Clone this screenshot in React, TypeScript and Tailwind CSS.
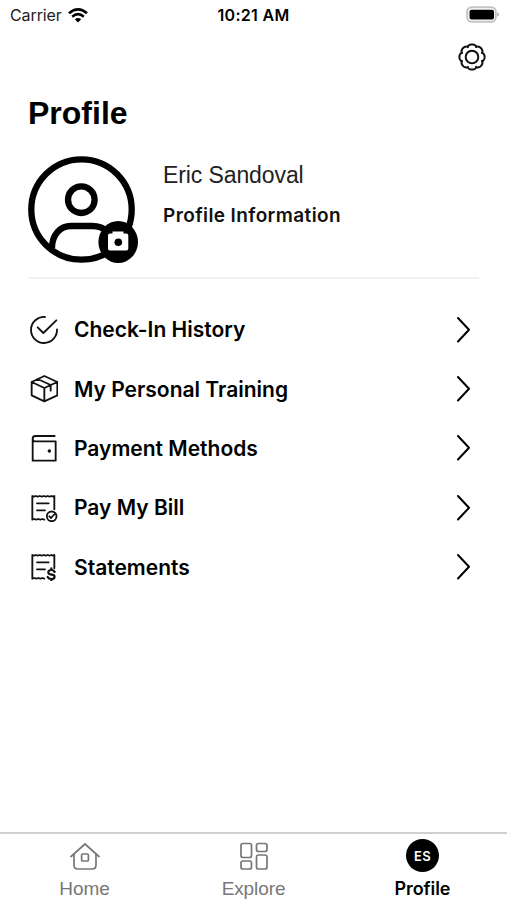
import type { ReactNode } from "react";

// Scalloped outline for the settings gear: wide lobes, narrow notches
const gearPath = () => {
  const points: string[] = [];
  for (let i = 0; i < 160; i++) {
    const t = (i / 160) * Math.PI * 2;
    const r = 10.7 + 1.9 * Math.sqrt(Math.abs(Math.cos(t * 4)));
    points.push(`${(14 + r * Math.sin(t)).toFixed(2)} ${(14 - r * Math.cos(t)).toFixed(2)}`);
  }
  return `M${points.join("L")}Z`;
};

function RowIcon({ children }: { children: ReactNode }) {
  return (
    <svg
      className="h-7 w-7 shrink-0"
      viewBox="0 0 84 84"
      fill="none"
      stroke="#111"
      strokeWidth="5.5"
      strokeLinecap="round"
      strokeLinejoin="round"
    >
      {children}
    </svg>
  );
}

function Receipt() {
  return (
    <>
      <path d="M7 77V6l5 2 5-2 6 2 6-2 6 2 6-2 6 2 6-2 6 2 6-2 4 2 4-2V46M7 77l6-2 6 2 6-2 6 2 6-2 6 2" />
      <path d="M21 28H56M21 49H45" />
    </>
  );
}

const rows = [
  {
    label: "Check-In History",
    icon: (
      <RowIcon>
        <path d="M45 3A39 39 0 1 0 81 40" />
        <path d="M23 34L40 51L79 13" />
      </RowIcon>
    ),
  },
  {
    label: "My Personal Training",
    icon: (
      <RowIcon>
        <path d="M43 3L82 21V61L43 79L5 61V21ZM5 21L43 39L82 21M43 39V79M23 12L62 30V47" />
      </RowIcon>
    ),
  },
  {
    label: "Payment Methods",
    icon: (
      <RowIcon>
        <path d="M74 6H16Q8 6 8 14V80H77V22H15Q8 22 8 14" />
        <circle cx="58" cy="51" r="2.5" fill="#111" />
      </RowIcon>
    ),
  },
  {
    label: "Pay My Bill",
    icon: (
      <RowIcon>
        <Receipt />
        <circle cx="65" cy="67" r="14.5" />
        <path d="M58 67L63 72L74 60" />
      </RowIcon>
    ),
  },
  {
    label: "Statements",
    icon: (
      <RowIcon>
        <Receipt />
        <path
          d="M74 57C72 52 68 51 64 51C53 51 52 62 61 64L66 65C77 67 76 78 64 78C59 78 55 76 53 72M64 46V51M64 78V83"
          strokeWidth="6.5"
        />
      </RowIcon>
    ),
  },
];

function StatusBar() {
  return (
    <div className="grid h-[30px] grid-cols-3 items-center pl-[10px] pr-[8px] text-[16px] text-[#222]">
      <div className="flex items-center gap-[6px]">
        <span className="tracking-[-0.1px]">Carrier</span>
        <svg className="h-[15px] w-5" viewBox="0 0 20 15" fill="none" stroke="#000" strokeWidth="2.7">
          <path d="M1 5.3Q10 -2.4 19 5.3" />
          <path d="M4.2 8.7Q10 3.7 15.8 8.7" />
          <path d="M10 14.6L6.8 11.3Q10 8.6 13.2 11.3Z" fill="#000" stroke="none" />
        </svg>
      </div>
      <div className="-ml-[2px] text-center font-semibold tracking-[0.3px] whitespace-nowrap text-black">10:21 AM</div>
      <div className="flex justify-end">
        <svg className="-mt-[2px] h-[17px] w-[33px]" viewBox="0 0 33 17">
          <rect x="1.2" y="1.2" width="28.6" height="14.6" rx="4.5" fill="#fff" stroke="#c4c4c4" strokeWidth="2" />
          <rect x="3.5" y="3.7" width="24.5" height="9.8" rx="2" />
          <path d="M31.3 6.3Q33 7 33 8.5T31.3 10.7Z" fill="#aaa" />
        </svg>
      </div>
    </div>
  );
}

function Avatar() {
  return (
    <svg className="h-[108px] w-[111px] shrink-0" viewBox="0 0 111 108" fill="none" stroke="#000" strokeWidth="6.3">
      <circle cx="53.5" cy="53.5" r="50.2" />
      <circle cx="53.3" cy="43.7" r="13.3" />
      <path d="M24 92C24 79 32 70 43 70H64C71 70 76 72 80 76" />
      <ellipse cx="90.2" cy="86" rx="19.8" ry="21" fill="#000" stroke="none" />
      <path
        d="M82 77.5H84.5V75.5H95.5V77.5H98.3Q100.3 77.5 100.3 79.5V92.5Q100.3 94.5 98.3 94.5H82Q80 94.5 80 92.5V79.5Q80 77.5 82 77.5Z"
        fill="#fff"
        stroke="none"
      />
      <circle cx="90.3" cy="86.2" r="3.8" fill="#000" stroke="none" />
    </svg>
  );
}

function TabBar() {
  return (
    <nav className="grid h-[68px] grid-cols-3 border-t-2 border-[#d0d0d0] font-['Liberation_Sans',sans-serif] text-[19px] leading-[22px] text-[#777]">
      <div className="flex flex-col items-center pt-[5px]">
        <svg className="h-8 w-8" viewBox="0 0 32 32" fill="none" stroke="#777" strokeWidth="1.7">
          <path d="M1.5 18L16 5L30.5 18" />
          <path d="M5 15V26Q5 30 9 30H23Q27 30 27 26V15" />
          <rect x="12.6" y="15" width="6.8" height="7" rx="1" />
        </svg>
        <span className="mt-[7px]">Home</span>
      </div>
      <div className="flex flex-col items-center pt-[5px]">
        <svg className="h-8 w-8" viewBox="0 0 32 32" fill="none" stroke="#777" strokeWidth="1.7">
          <rect x="3" y="4.5" width="10.5" height="14" rx="2" />
          <rect x="3" y="22" width="10.5" height="8" rx="2" />
          <rect x="18.5" y="4.5" width="10.5" height="8" rx="2" />
          <rect x="18.5" y="16" width="10.5" height="14" rx="2" />
        </svg>
        <span className="mt-[7px] tracking-[-0.1px]">Explore</span>
      </div>
      <div className="flex flex-col items-center pt-[5px] text-black">
        <div className="flex h-[33px] w-[33px] items-center justify-center rounded-full bg-black font-['Inter',sans-serif] text-[13px] font-semibold tracking-[0.3px] text-white">
          ES
        </div>
        <span className="mt-[6px] font-['Inter',sans-serif] text-[18px] font-semibold tracking-[-0.1px]">Profile</span>
      </div>
    </nav>
  );
}

export default function App() {
  return (
    <div className="flex h-[900px] w-[507px] flex-col bg-white font-['Inter',sans-serif] text-black">
      <StatusBar />
      <header className="flex h-[54px] justify-end pr-[21px] pt-[13px]">
        <svg className="h-7 w-7" viewBox="0 0 28 28" fill="none" stroke="#111" strokeWidth="2" strokeLinejoin="round">
          <path d={gearPath()} />
          <circle cx="14" cy="14" r="6.3" />
        </svg>
      </header>
      <main className="flex-1 px-[28px]">
        <h1 className="pt-[11px] font-['Liberation_Sans',sans-serif] text-[32px] leading-[36px] font-bold">Profile</h1>
        <section className="flex h-[148px] gap-6 border-b-2 border-[#f1f1f1] pt-[25px]">
          <Avatar />
          <div className="pt-[6px]">
            <div className="font-['Liberation_Sans',sans-serif] text-[23px] leading-[26px] tracking-[-0.1px] text-[#222]">
              Eric Sandoval
            </div>
            <div className="mt-[16px] text-[19px] leading-[24px] font-semibold tracking-[0.4px] whitespace-nowrap text-[#111]">
              Profile Information
            </div>
          </div>
        </section>
        <ul className="pt-[21px]">
          {rows.map((row) => (
            <li key={row.label} className="flex h-[59.3px] items-center pl-[2px] pr-[9px]">
              {row.icon}
              <span className="ml-4 flex-1 pt-[1px] text-[21px] font-semibold whitespace-nowrap">{row.label}</span>
              <svg className="h-7 w-[14px]" viewBox="0 0 14 28" fill="none" stroke="#000" strokeWidth="2" strokeLinecap="round" strokeLinejoin="round">
                <path d="M2 2L13 13.8L2 25.5" />
              </svg>
            </li>
          ))}
        </ul>
      </main>
      <TabBar />
    </div>
  );
}
